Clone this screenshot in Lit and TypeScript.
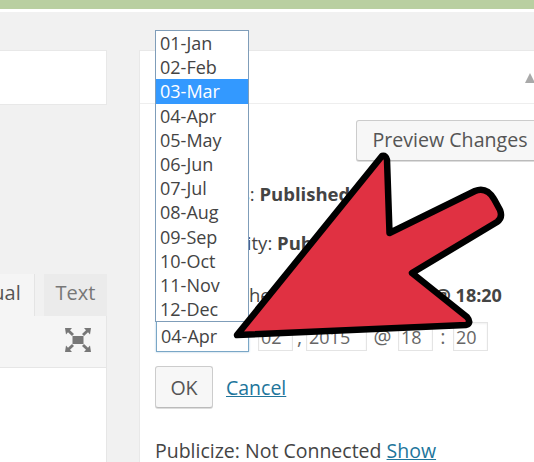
import { LitElement, html, css } from "lit";
import { customElement } from "lit/decorators.js";

const months = ["01-Jan","02-Feb","03-Mar","04-Apr","05-May","06-Jun","07-Jul","08-Aug","09-Sep","10-Oct","11-Nov","12-Dec"];

@customElement("app-root")
export class AppRoot extends LitElement {
  static styles = css`
    :host { display: block; position: relative; width: 534px; height: 462px; overflow: hidden; background: #f1f1f1; font-family: "Open Sans", sans-serif; font-size: 18px; color: #444; }
    * { box-sizing: border-box; }
    .page { display: flex; flex-direction: column; height: 100%; }
    .band { height: 9px; background: #b9cfa1; flex: none; }
    .rule { height: 3px; background: #fff; flex: none; }
    .main { flex: 1; display: grid; grid-template-columns: 107px 395px; column-gap: 32px; min-height: 0; }
    .left { display: flex; flex-direction: column; padding-top: 38px; }
    .title { height: 55px; background: #fff; border: 1px solid #e8e8e8; border-left: 0; flex: none; }
    .tabs { margin-top: 169px; display: flex; height: 42px; flex: none; }
    .tab { font-size: 20px; line-height: 38px; color: #555; }
    .tab.on { width: 35px; background: #f5f5f5; border-right: 1px solid #e4e4e4; text-align: right; padding-right: 13px; overflow: hidden; direction: rtl; }
    .tab.off { margin-left: 9px; width: 64px; background: #ebebeb; color: #777; text-align: center; }
    .toolbar { height: 52px; background: #f5f5f5; border-bottom: 1px solid #e6e6e6; border-right: 1px solid #e6e6e6; display: flex; justify-content: flex-end; align-items: center; padding: 0 15px 4px 0; flex: none; }
    .content { flex: 1; background: #fff; border-right: 1px solid #e6e6e6; }
    .side { background: #fff; margin-top: 38px; border-top: 1px solid #e8e8e8; border-left: 1px solid #e8e8e8; padding-left: 15px; display: flex; flex-direction: column; }
    .head { height: 53px; margin-left: -15px; border-bottom: 1px solid #eee; display: flex; justify-content: flex-end; align-items: center; padding-top: 1px; flex: none; }
    .tri { width: 0; height: 0; border-left: 5px solid transparent; border-right: 5px solid transparent; border-bottom: 10px solid #a9a9a9; margin-right: -1px; }
    .previewRow { display: flex; justify-content: flex-end; margin-top: 16px; flex: none; }
    .btn { background: #f7f7f7; border: 1px solid #ccc; border-bottom-color: #bbb; border-radius: 3px; color: #555; font: inherit; font-size: 19.6px; display: flex; align-items: center; justify-content: center; box-shadow: 0 1px 0 #ddd; }
    .preview { width: 190px; height: 41px; margin-right: -12px; padding: 0 2px 2px 0; }
    .line { font-size: 18.5px; line-height: 24px; white-space: nowrap; color: #444; }
    .line b { font-weight: 700; }
    .status { margin-top: 21px; padding-left: 41px; }
    .vis { margin-top: 25px; padding-left: 42px; }
    .pub { margin-top: 28px; padding-left: 42px; display: flex; }
    .line b.time { font-size: 18px; margin-left: 14px; }
    .date { display: flex; align-items: center; margin-top: 13px; height: 32px; font-size: 20px; color: #666; flex: none; }
    .mon { width: 93px; height: 32px; border: 1px solid #7aa7c7; box-shadow: 0 0 2px #a8c8de; background: #fff; color: #444; padding-left: 4px; line-height: 30px; font-size: 18px; margin-left: 1px; }
    .inp { height: 29px; border: 1px solid #e4e4e4; padding-left: 2px; line-height: 29px; color: #666; font-size: 18px; background: #fff; box-shadow: inset 0 1px 2px #f0f0f0; }
    .d { width: 35px; margin-left: 9px; }
    .y { width: 61px; }
    .h { width: 35px; }
    .m { width: 35px; }
    .sep1 { width: 13px; text-align: center; }
    .sep2 { width: 31px; text-align: center; }
    .sep3 { width: 20px; text-align: center; }
    .act { display: flex; align-items: center; margin-top: 14px; flex: none; }
    .ok { width: 58px; height: 42px; }
    .cancel { margin-left: 13px; font-size: 19.5px; color: #21759b; text-decoration: underline; }
    .pubz { margin-top: 34px; font-size: 19.5px; line-height: 18px; white-space: nowrap; }
    .pubz a { color: #21759b; text-decoration: underline; }
    .list { position: absolute; left: 155px; top: 30px; width: 93.5px; height: 292px; background: #fff; border: 1px solid #7f9db9; font-size: 18px; color: #444; }
    .opt { height: 24.2px; line-height: 24.2px; padding-left: 4px; }
    .opt.sel { background: #3399ff; color: #fff; }
    .arrow { position: absolute; left: 0; top: 0; pointer-events: none; }
  `;

  render() {
    return html`
      <div class="page">
        <div class="band"></div>
        <div class="rule"></div>
        <div class="main">
          <div class="left">
            <div class="title"></div>
            <div class="tabs">
              <div class="tab on">Visual</div>
              <div class="tab off">Text</div>
            </div>
            <div class="toolbar">
              <svg width="26" height="24" viewBox="0 0 26 24" fill="#777">
                <rect x="7.5" y="8" width="11" height="8"/>
                <path d="M0 0h7L5 2.2 9 6 7 8 3 4.2 1 6.5zM26 0h-7l2 2.2L17 6l2 2 4-3.8 2 2.3zM0 24h7l-2-2.2L9 18l-2-2-4 3.8-2-2.3zM26 24h-7l2-2.2L17 18l2-2 4 3.8 2-2.3z"/>
              </svg>
            </div>
            <div class="content"></div>
          </div>
          <div class="side">
            <div class="head"><div class="tri"></div></div>
            <div class="previewRow"><div class="btn preview">Preview Changes</div></div>
            <div class="line status">Status: <b>Published</b></div>
            <div class="line vis">Visibility: <b>Public</b></div>
            <div class="line pub">Published on: <b class="time">Mar 3, 2015 @ 18:20</b></div>
            <div class="date">
              <div class="mon">04-Apr</div>
              <div class="inp d">02</div>
              <div class="sep1">,</div>
              <div class="inp y">2015</div>
              <div class="sep2">@</div>
              <div class="inp h">18</div>
              <div class="sep3">:</div>
              <div class="inp m">20</div>
            </div>
            <div class="act">
              <div class="btn ok">OK</div>
              <a class="cancel">Cancel</a>
            </div>
            <div class="pubz">Publicize: Not Connected <a>Show</a></div>
          </div>
        </div>
      </div>
      <div class="list">
        ${months.map((m, i) => html`<div class="opt ${i === 2 ? "sel" : ""}">${m}</div>`)}
      </div>
      <svg class="arrow" width="534" height="462" viewBox="0 0 534 462">
        <path d="M382 156 Q386 155 387 160 L389.5 233 L475 191 Q482 188 488 192 Q492 195 494 199 L500 210 Q503 218 497 222 L412 273 L467 317 Q472 323 466 325 L237 335 Z" fill="#e03142" stroke="#000" stroke-width="6.5" stroke-linejoin="round"/>
      </svg>
    `;
  }
}
